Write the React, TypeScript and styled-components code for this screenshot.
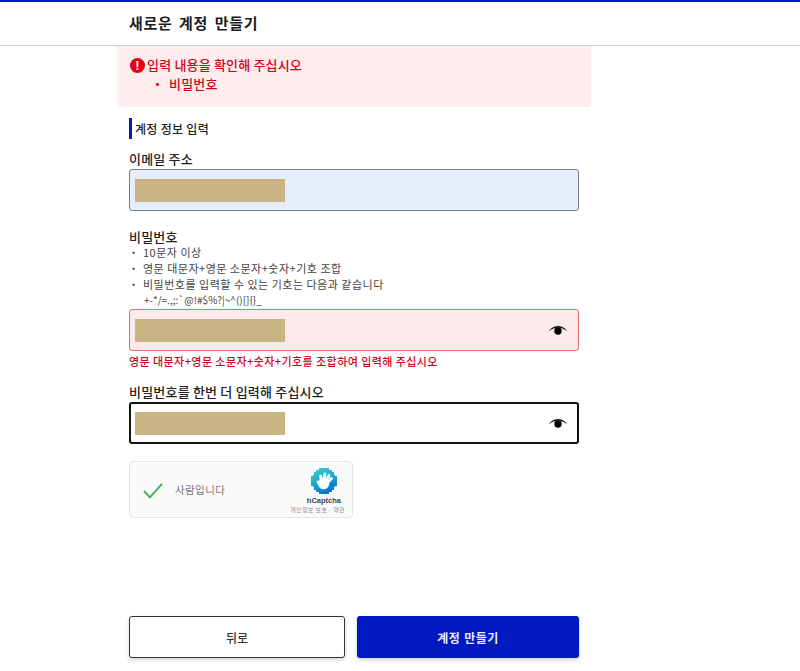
import React from 'react';
import styled, { createGlobalStyle } from 'styled-components';

const GlobalStyle = createGlobalStyle`
    html, body {
        margin: 0;
        padding: 0;
        background: #fff;
        font-family: "Noto Sans CJK KR", "Noto Sans", sans-serif;
        color: #222;
    }
`;

const EyeIcon: React.FC = () => (
    <svg width="18" height="11" viewBox="0 0 18 11">
        <path d="M0.500 5.500C3 2.500 6 1.200 9 1.200s6 1.300 8.500 4.300C15 3.700 12 2.600 9 2.600S3 3.700 0.500 5.500Z" fill="#000" stroke="#000" strokeWidth="0.400" />
        <circle cx="9" cy="6" r="3.700" fill="#000" />
    </svg>
);

const HCaptchaLogo: React.FC = () => (
    <LogoSvg width="26" height="26" viewBox="0 0 26 26">
        <defs>
            <linearGradient id="hc" x1="0.200" y1="0" x2="0.600" y2="1">
                <stop offset="0" stopColor="#36cfc4" />
                <stop offset="0.500" stopColor="#1ca6cc" />
                <stop offset="1" stopColor="#0a6fcb" />
            </linearGradient>
        </defs>
        <path d="M8 0h10v2h3v2h2v3h1v1h2v10h-2v1h-1v3h-2v2h-3v2H8v-2H5v-2H3v-3H2v-1H0V8h2V7h1V4h2V2h3z" fill="url(#hc)" />
        <g stroke="#fff" strokeLinecap="round" strokeWidth="2.800" fill="none">
            <path d="M10.500 12L9.500 8" />
            <path d="M13 11L14 6" />
            <path d="M15.500 12L18 7.500" />
            <path d="M17 14L20.500 10.500" />
        </g>
        <path d="M8 13c-1-1.200-3-.4-2.500 1.200l2.500 4.500c1.500 2.500 4.500 3.300 7 2.100 2-1 3-3 3.200-5l-.2-3.500L9 10z" fill="#fff" />
    </LogoSvg>
);

const App: React.FC = () => {
    return (
        <Page>
            <GlobalStyle />
            <Header>
                <Title>새로운 계정 만들기</Title>
            </Header>
            <Column>
                <Alert>
                    <AlertHead>
                        <AlertIcon>!</AlertIcon>
                        입력 내용을 확인해 주십시오
                    </AlertHead>
                    <AlertItem>비밀번호</AlertItem>
                </Alert>
                <Form>
                    <SectionTitle>계정 정보 입력</SectionTitle>
                    <EmailField>
                        <Label>이메일 주소</Label>
                        <InputBox $variant="filled">
                            <Mask />
                        </InputBox>
                    </EmailField>
                    <PasswordField>
                        <Label>비밀번호</Label>
                        <HintList>
                            <Hint>10문자 이상</Hint>
                            <Hint>영문 대문자+영문 소문자+숫자+기호 조합</Hint>
                            <Hint>비밀번호를 입력할 수 있는 기호는 다음과 같습니다</Hint>
                            <Symbols>{'+-*/=.,;:`@!#$%?|~^()[]{}_'}</Symbols>
                        </HintList>
                        <InputBox $variant="error">
                            <Mask />
                            <EyeButton>
                                <EyeIcon />
                            </EyeButton>
                        </InputBox>
                        <ErrorText>영문 대문자+영문 소문자+숫자+기호를 조합하여 입력해 주십시오</ErrorText>
                    </PasswordField>
                    <ConfirmField>
                        <Label>비밀번호를 한번 더 입력해 주십시오</Label>
                        <InputBox $variant="focus">
                            <Mask />
                            <EyeButton>
                                <EyeIcon />
                            </EyeButton>
                        </InputBox>
                    </ConfirmField>
                    <Captcha>
                        <CheckMark viewBox="0 0 24 20" width="22" height="18">
                            <path d="M2 10l6.500 7L22 2" fill="none" stroke="#4caf50" strokeWidth="2.200" />
                        </CheckMark>
                        <CaptchaText>사람입니다</CaptchaText>
                        <CaptchaBrand>
                            <HCaptchaLogo />
                            <BrandName>hCaptcha</BrandName>
                            <BrandLinks>개인정보 보호 - 약관</BrandLinks>
                        </CaptchaBrand>
                    </Captcha>
                    <Actions>
                        <BackButton>뒤로</BackButton>
                        <SubmitButton>계정 만들기</SubmitButton>
                    </Actions>
                </Form>
            </Column>
        </Page>
    );
};

const Page = styled.div`
    width: 800px;
    height: 671px;
    overflow: hidden;
`;

const Header = styled.header`
    box-sizing: border-box;
    height: 46px;
    border-top: 2px solid #0019c0;
    border-bottom: 1px solid #ccc;
    padding: 0 0 2px 129px;
    display: flex;
    align-items: center;
`;

const Title = styled.h1`
    margin: 0;
    font-size: 15px;
    font-weight: 700;
    letter-spacing: 0.7px;
    word-spacing: 2.500px;
    color: #1c1c1c;
`;

const Column = styled.main`
    width: 474px;
    margin-left: 117px;
`;

const Alert = styled.div`
    box-sizing: border-box;
    height: 61px;
    background: #ffecec;
    padding: 10px 12px 0 13px;
    color: #d0021b;
    font-size: 13px;
    font-weight: 500;
    line-height: 18px;
    letter-spacing: 0.18px;
`;

const AlertHead = styled.div`
    display: flex;
    align-items: center;
    margin-bottom: 1px;
`;

const AlertIcon = styled.span`
    width: 15px;
    height: 15px;
    border-radius: 50%;
    background: #e60012;
    color: #fff;
    font-family: "Liberation Sans", sans-serif;
    font-size: 13px;
    font-weight: 700;
    line-height: 15px;
    text-align: center;
    margin-right: 2px;
`;

const AlertItem = styled.div`
    position: relative;
    padding-left: 39px;

    &::before {
        content: '・';
        position: absolute;
        left: 21px;
    }
`;

const Form = styled.div`
    padding: 11px 12px 0;
`;

const SectionTitle = styled.h2`
    margin: 0 0 10px;
    height: 21px;
    border-left: 3px solid #0019c0;
    padding-left: 3px;
    font-size: 12px;
    font-weight: 500;
    line-height: 21px;
    letter-spacing: 0.3px;
    color: #222;
`;

const EmailField = styled.div`
    margin-bottom: 16px;
`;

const PasswordField = styled.div`
    margin-bottom: 12px;
`;

const ConfirmField = styled.div`
    margin-bottom: 17px;
`;

const Label = styled.div`
    font-size: 13px;
    font-weight: 500;
    line-height: 20px;
    letter-spacing: 0.2px;
    color: #222;
`;

const HintList = styled.ul`
    list-style: none;
    margin: -3px 0 1px;
    padding: 0;
`;

const Hint = styled.li`
    position: relative;
    padding-left: 14px;
    font-size: 11px;
    line-height: 16px;
    letter-spacing: 0.5px;
    color: #444;

    &::before {
        content: '・';
        position: absolute;
        left: -1px;
    }
`;

const Symbols = styled.li`
    padding-left: 15px;
    font-size: 10px;
    line-height: 16px;
    color: #444;
`;

const variants = {
    filled: { background: '#e6eefb', border: '1px solid #7a7f8c', padding: '0 11px 0 5px' },
    error: { background: '#fceaea', border: '1px solid #e2706e', padding: '0 11px 0 5px' },
    focus: { background: '#fff', border: '2px solid #111', padding: '0 10px 0 4px' },
};

const InputBox = styled.div<{ $variant: keyof typeof variants }>`
    box-sizing: border-box;
    width: 450px;
    height: 42px;
    border-radius: 3px;
    display: flex;
    align-items: center;
    justify-content: space-between;
    padding: ${props => variants[props.$variant].padding};
    background: ${props => variants[props.$variant].background};
    border: ${props => variants[props.$variant].border};
`;

const Mask = styled.div`
    width: 150px;
    height: 23px;
    background: #c9b484;
`;

const EyeButton = styled.span`
    display: flex;
`;

const ErrorText = styled.div`
    margin-top: 1px;
    font-size: 11px;
    font-weight: 500;
    line-height: 18px;
    letter-spacing: 0.43px;
    color: #d0021b;
`;

const Captcha = styled.div`
    box-sizing: border-box;
    width: 224px;
    height: 57px;
    border: 1px solid #e3e3e3;
    border-radius: 4px;
    background: #fafafa;
    display: flex;
    align-items: center;
    padding: 0 7px 0 12px;
`;

const CheckMark = styled.svg`
    flex: none;
    position: relative;
    top: 1px;
`;

const CaptchaText = styled.span`
    margin-left: 11px;
    font-size: 10.500px;
    letter-spacing: 0.4px;
    color: #777;
`;

const CaptchaBrand = styled.div`
    margin-left: auto;
    display: flex;
    flex-direction: column;
    align-items: flex-end;
    padding-top: 3px;
`;

const LogoSvg = styled.svg`
    margin-right: 8px;
`;

const BrandName = styled.div`
    margin: 2px 4px 0 0;
    font-family: "Liberation Sans", sans-serif;
    font-size: 7.500px;
    font-weight: 700;
    line-height: 9px;
    color: #444;
`;

const BrandLinks = styled.div`
    font-size: 6px;
    line-height: 9px;
    letter-spacing: 0.38px;
    color: #8a8a8a;
    white-space: nowrap;
`;

const Actions = styled.div`
    margin-top: 98px;
    display: flex;
    gap: 12px;
    width: 450px;
`;

const BackButton = styled.button`
    box-sizing: border-box;
    width: 216px;
    height: 42px;
    border: 1px solid #333;
    border-radius: 3px;
    background: #fff;
    box-shadow: 0 2px 4px rgba(0, 0, 0, 0.18);
    font-family: inherit;
    font-size: 12px;
    font-weight: 500;
    color: #333;
`;

const SubmitButton = styled.button`
    box-sizing: border-box;
    width: 222px;
    height: 42px;
    border: none;
    border-radius: 3px;
    background: #0019c0;
    box-shadow: 0 2px 4px rgba(0, 0, 0, 0.18);
    font-family: inherit;
    font-size: 12px;
    font-weight: 700;
    letter-spacing: 0.4px;
    word-spacing: 1px;
    color: #e8ebff;
`;

export default App;
